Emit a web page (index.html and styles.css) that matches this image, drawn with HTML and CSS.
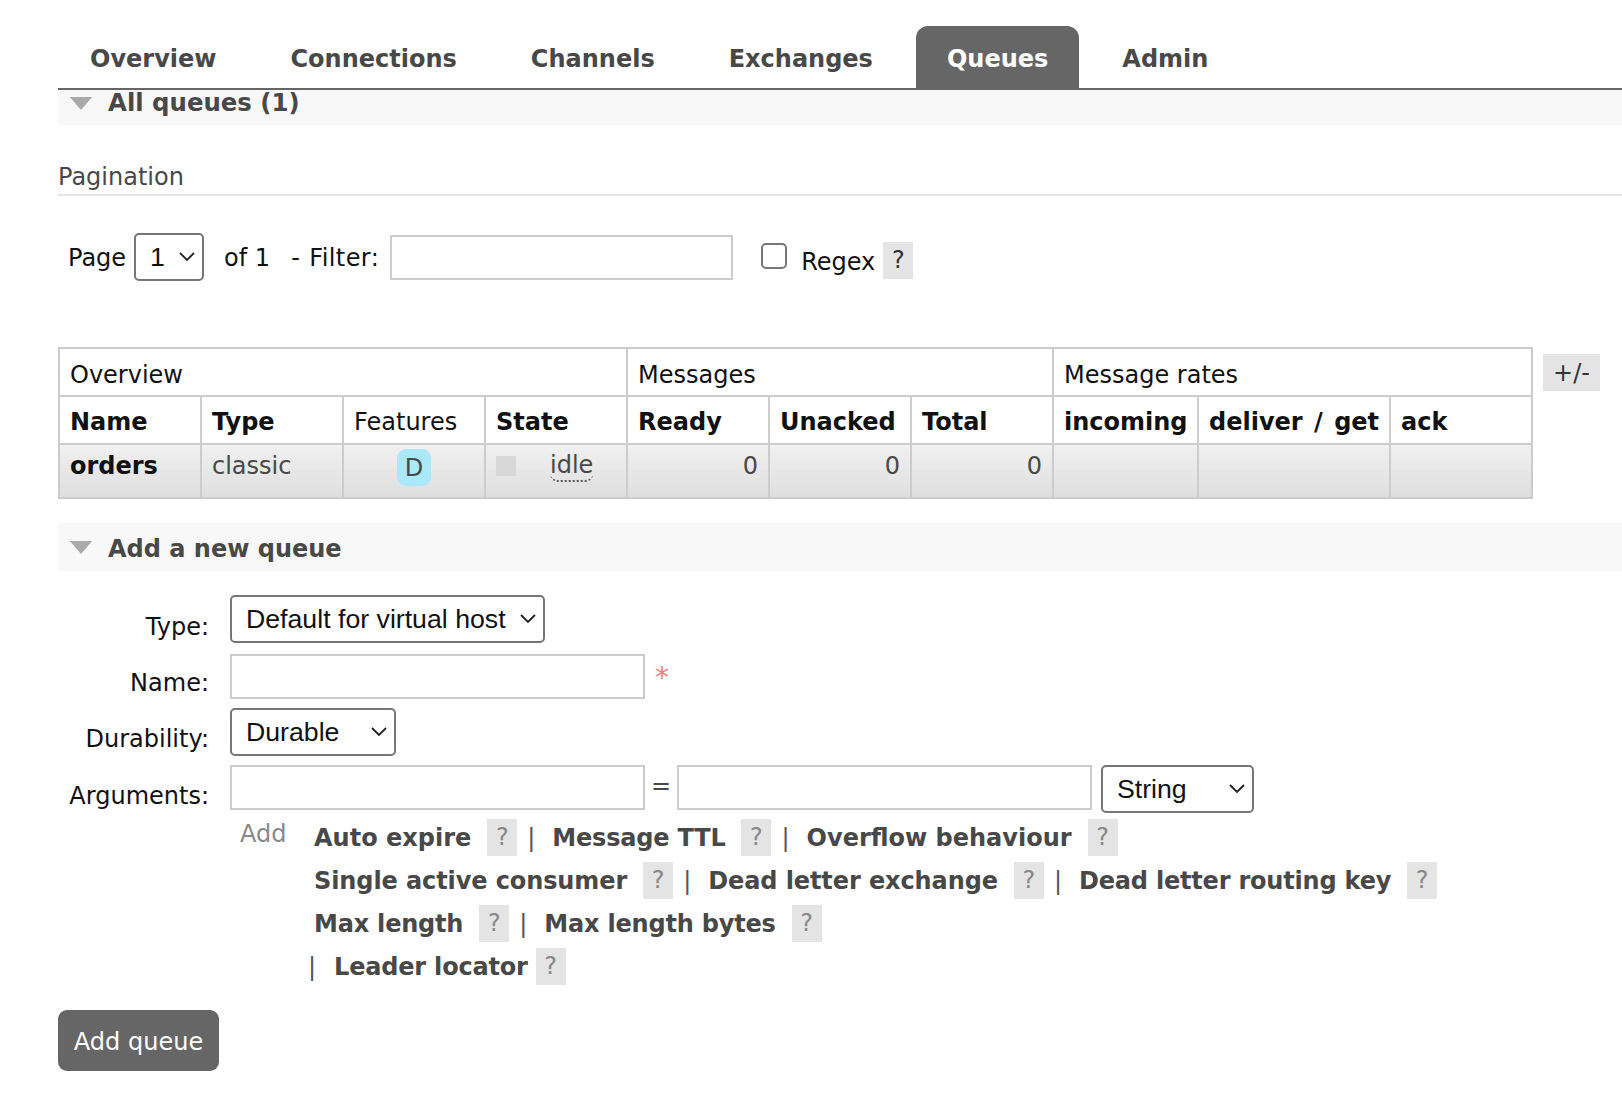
FILE: index.html
```html
<!DOCTYPE html>
<html lang="en">
<head>
<meta charset="utf-8">
<title>Queues</title>
<link rel="stylesheet" href="styles.css">
</head>
<body>
<nav class="tabs">
  <a class="tab">Overview</a>
  <a class="tab">Connections</a>
  <a class="tab">Channels</a>
  <a class="tab">Exchanges</a>
  <a class="tab active">Queues</a>
  <a class="tab">Admin</a>
</nav>
<section class="bar bar-top">
  <svg class="tri" viewBox="0 0 24 14"><path d="M0 0H24L12 14Z"/></svg>
  <h2>All queues (1)</h2>
</section>
<h3 class="sub">Pagination</h3>
<div class="pager">
  <label>Page</label>
  <span class="sel sel-page"><select><option>1</option></select><svg viewBox="0 0 16 10"><path d="M1 1L8 8L15 1"/></svg></span>
  <span class="of">of 1</span>
  <label class="filter">- Filter:</label>
  <input class="text text-filter" type="text">
  <input class="check" type="checkbox">
  <label class="regex">Regex</label>
  <span class="help help-dark">?</span>
</div>
<div class="table-row">
  <table class="list">
    <colgroup>
      <col class="c1"><col class="c2"><col class="c3"><col class="c4"><col class="c5"><col class="c6"><col class="c7"><col class="c8"><col class="c9"><col class="c10">
    </colgroup>
    <thead>
      <tr class="group"><th colspan="4">Overview</th><th colspan="3">Messages</th><th colspan="3">Message rates</th></tr>
      <tr class="heads"><th>Name</th><th>Type</th><th class="plain">Features</th><th>State</th><th>Ready</th><th>Unacked</th><th>Total</th><th>incoming</th><th class="spaced">deliver / get</th><th>ack</th></tr>
    </thead>
    <tbody>
      <tr>
        <td class="name">orders</td>
        <td>classic</td>
        <td class="center"><span class="badge">D</span></td>
        <td><span class="state"><i class="dot"></i><abbr>idle</abbr></span></td>
        <td class="num">0</td><td class="num">0</td><td class="num">0</td>
        <td></td><td></td><td></td>
      </tr>
    </tbody>
  </table>
  <span class="plus">+/-</span>
</div>
<section class="bar bar-add">
  <svg class="tri" viewBox="0 0 24 14"><path d="M0 0H24L12 14Z"/></svg>
  <h2>Add a new queue</h2>
</section>
<form class="form">
  <label class="f-label l-type">Type:</label>
  <div class="f-row r-type"><span class="sel sel-type"><select><option>Default for virtual host</option></select><svg viewBox="0 0 16 10"><path d="M1 1L8 8L15 1"/></svg></span></div>
  <label class="f-label l-name">Name:</label>
  <div class="f-row r-name"><input class="text text-wide" type="text"><span class="star">*</span></div>
  <label class="f-label l-dur">Durability:</label>
  <div class="f-row r-dur"><span class="sel sel-dur"><select><option>Durable</option></select><svg viewBox="0 0 16 10"><path d="M1 1L8 8L15 1"/></svg></span></div>
  <label class="f-label l-arg">Arguments:</label>
  <div class="f-row r-arg"><input class="text text-wide" type="text"><span class="eq">=</span><input class="text text-wide" type="text"><span class="sel sel-str"><select><option>String</option></select><svg viewBox="0 0 16 10"><path d="M1 1L8 8L15 1"/></svg></span></div>
  <div class="adds">
    <span class="add-label">Add</span>
    <div class="links">
      <div class="line"><b>Auto expire</b><span class="help g16">?</span><span class="sep">|</span><b class="t2">Message TTL</b><span class="help g16">?</span><span class="sep">|</span><b>Overflow behaviour</b><span class="help g16">?</span></div>
      <div class="line"><b class="t1">Single active consumer</b><span class="help g16">?</span><span class="sep">|</span><b class="t1">Dead letter exchange</b><span class="help g16">?</span><span class="sep">|</span><b class="t2">Dead letter routing key</b><span class="help g16">?</span></div>
      <div class="line"><b class="t2">Max length</b><span class="help g16">?</span><span class="sep">|</span><b class="t2">Max length bytes</b><span class="help g16">?</span></div>
      <div class="line last"><span class="sep first">|</span><b class="t2">Leader locator</b><span class="help g8">?</span></div>
    </div>
  </div>
  <button class="submit" type="button">Add queue</button>
</form>
</body>
</html>
```

FILE: styles.css
```css
* { box-sizing: border-box; }
html, body { margin: 0; padding: 0; background: #fff; }
body {
  width: 1622px;
  height: 1096px;
  overflow: hidden;
  font-family: "DejaVu Sans", Verdana, sans-serif;
  font-size: 24px;
  color: #484848;
  padding-left: 58px;
}

.tabs {
  display: flex;
  gap: 12px;
  height: 90px;
  padding: 26px 0 0 1px;
  border-bottom: 2px solid #666;
}
.tab {
  padding: 0 31px;
  height: 62px;
  line-height: 66px;
  font-weight: 700;
  border-radius: 12px 12px 0 0;
  color: #484848;
}
.tab.active { background: #666; color: #fff; }

.bar {
  display: flex;
  align-items: center;
  background: #f8f8f8;
  padding-left: 11px;
}
.bar h2 { margin: 0 0 0 15px; font-size: 24px; font-weight: 700; color: #484848; }
.tri { width: 24px; height: 13px; fill: #aaa; flex: none; }
.bar-top { height: 35px; align-items: flex-start; }
.bar-top h2 { line-height: 25px; font-size: 24.4px; }
.bar-top .tri { margin-top: 7px; }
.bar-add { height: 48px; margin-top: 24px; }
.bar-add h2 { padding-top: 4px; }

.sub {
  margin: 35px 0 0;
  height: 36px;
  line-height: 34px;
  font-size: 24px;
  font-weight: 400;
  color: #484848;
  border-bottom: 2px solid #e4e4e4;
}

.pager {
  display: flex;
  align-items: center;
  height: 48px;
  margin-top: 37px;
  padding-left: 10px;
  color: #111;
}
.pager label, .of { margin-top: 2px; }
.of { margin-left: 20px; }
.pager .filter { margin-left: 21px; letter-spacing: .4px; word-spacing: 1px; }

.sel { position: relative; display: inline-block; flex: none; }
.sel select {
  display: block;
  width: 100%;
  height: 100%;
  appearance: none;
  background: #fff;
  border: 2px solid #767676;
  border-radius: 5px;
  padding: 0 0 0 14px;
  font-family: "Liberation Sans", Arial, sans-serif;
  font-size: 26.7px;
  color: #111;
}
.sel svg {
  position: absolute;
  right: 9px;
  top: 50%;
  width: 16px;
  height: 10px;
  margin-top: -5px;
  fill: none;
  stroke: #222;
  stroke-width: 1.8;
  pointer-events: none;
}
.sel-page { width: 70px; height: 48px; margin-left: 8px; }
.sel-type { width: 315px; height: 48px; }
.sel-dur { width: 166px; height: 48px; }
.sel-str { width: 153px; height: 48px; margin-left: 9px; }

.text {
  flex: none;
  height: 45px;
  border: 2px solid #ccc;
  background: #fff;
  padding: 0;
}
.text-filter { width: 343px; margin-left: 11px; }
.text-wide { width: 415px; }

.check {
  appearance: none;
  width: 26px;
  height: 26px;
  margin: -2px 0 0 28px;
  border: 2px solid #767676;
  border-radius: 5px;
  background: #fff;
  flex: none;
}
.pager .regex { margin: 10px 0 0 14px; }

.help {
  display: inline-block;
  flex: none;
  width: 30px;
  height: 37px;
  line-height: 37px;
  text-align: center;
  background: #e4e4e4;
  color: #888;
  font-weight: 400;
}
.help-dark { color: #333; margin: 7px 0 0 8px; }

.table-row {
  display: flex;
  align-items: flex-start;
  margin-top: 66px;
}
.list {
  width: 1475px;
  table-layout: fixed;
  border-collapse: collapse;
  border: 2px solid #ccc;
}
.c1, .c2, .c3, .c4, .c5, .c6, .c7, .c8 { width: 142px; }
.c8 { width: 145px; }
.c9 { width: 192px; }
.list th, .list td {
  border: 2px solid #ccc;
  padding: 0 10px;
  text-align: left;
  white-space: nowrap;
}
.list th { color: #111; }
.group th { height: 48px; padding-top: 6px; font-weight: 400; }
.heads th { height: 48px; padding-top: 4px; font-weight: 700; }
.heads th.plain { font-weight: 400; }
.heads th.spaced { word-spacing: 3px; }
.list tbody tr { background: linear-gradient(#f1f1f1, #dedede); }
.list td { height: 54px; vertical-align: top; padding-top: 6px; line-height: 30px; }
.list td.name { font-weight: 700; color: #111; }
.list td.num { text-align: right; }
.list td.center { text-align: center; padding-top: 4px; }
.badge {
  display: inline-block;
  width: 34px;
  height: 37px;
  line-height: 39px;
  text-align: center;
  background: #aae8fc;
  border-radius: 9px;
}
.state { display: flex; align-items: flex-start; }
.dot { width: 20px; height: 20px; margin-top: 5px; background: #d8d8d8; flex: none; }
abbr { margin-left: 34px; border-bottom: 2px dotted #555; border-radius: 0 0 8px 8px; line-height: 29px; height: 31px; }
.plus {
  margin: 7px 0 0 10px;
  width: 57px;
  height: 37px;
  line-height: 38px;
  text-align: center;
  background: #e4e4e4;
  color: #333;
  flex: none;
}

.form {
  display: grid;
  grid-template-columns: 151px 1fr;
  column-gap: 21px;
  margin-top: 24px;
  color: #111;
}
.f-label { text-align: right; }
.l-type { margin-top: 18px; }
.l-name { margin-top: 26px; }
.l-dur { margin-top: 26px; }
.l-arg { margin-top: 26px; }
.f-row { display: flex; align-items: flex-start; }
.r-name { margin-top: 11px; height: 45px; }
.r-dur { margin-top: 9px; }
.r-arg { margin-top: 9px; }
.star { color: #f08080; margin-left: 10px; margin-top: 8px; font-size: 28px; line-height: 32px; }
.eq { width: 32px; text-align: center; margin-top: 7px; color: #484848; }

.adds {
  grid-column: 1 / 3;
  display: flex;
  margin-left: 182px;
  margin-top: 3px;
}
.add-label { width: 74px; color: #888; margin-top: 4px; flex: none; }
.line {
  display: flex;
  align-items: center;
  height: 43px;
  color: #484848;
}
.line b { font-weight: 700; }
.line b.t1 { letter-spacing: -.1px; }
.line b.t2 { letter-spacing: -.2px; }
.g16 { margin-left: 16px; }
.g8 { margin-left: 8px; }
.sep { margin: 0 17px 0 10px; color: #555; }
.sep.first { margin: 0 18px 0 -6px; }

.submit {
  grid-column: 1 / 3;
  justify-self: start;
  width: 161px;
  height: 61px;
  margin-top: 22px;
  padding: 2px 0 0;
  background: #666;
  color: #fff;
  border: 0;
  border-radius: 9px;
  font-family: "DejaVu Sans", Verdana, sans-serif;
  font-size: 24px;
}
```
